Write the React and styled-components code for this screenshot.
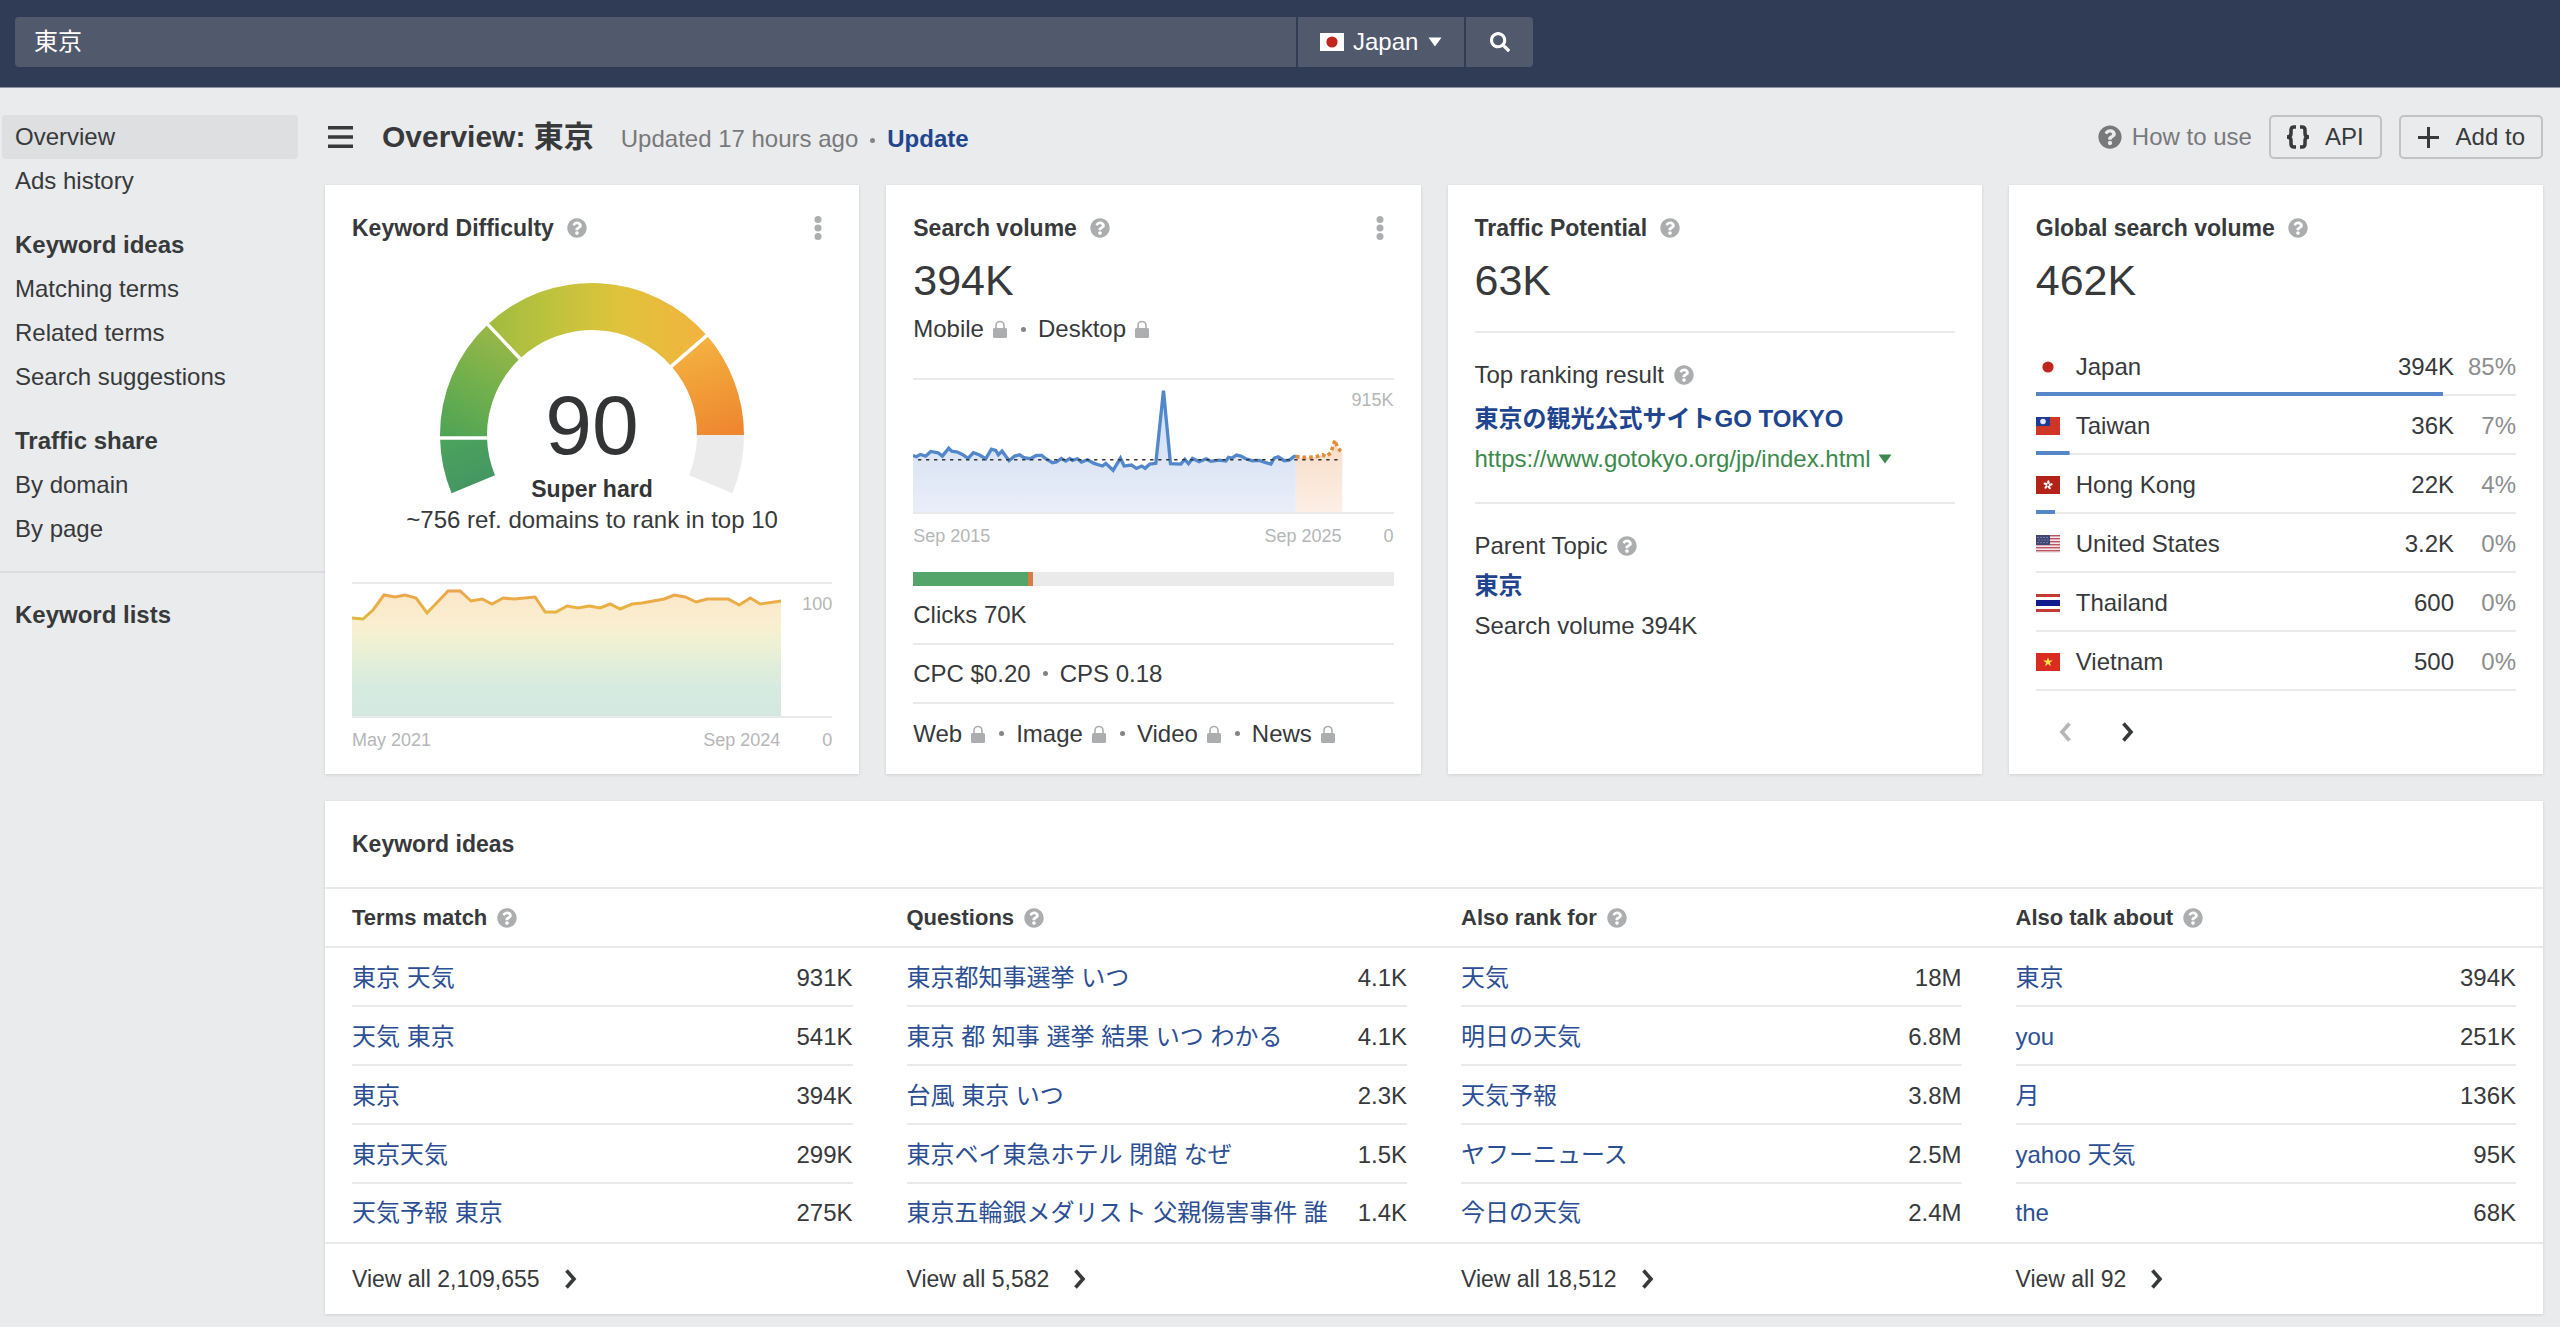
import React from 'react';
import styled, { createGlobalStyle, css } from 'styled-components';
import { FaQuestionCircle, FaSearch } from 'react-icons/fa';

const GlobalStyle = createGlobalStyle`
  *,
  *::before,
  *::after {
    box-sizing: border-box;
  }

  body {
    margin: 0;
    background: #eaebed;
    color: #37393b;
    font-family: 'Liberation Sans', 'Noto Sans CJK JP', Arial, sans-serif;
    font-size: 24px;
    line-height: 40px;
  }

  h1, h2, h3, p, ul {
    margin: 0;
    padding: 0;
  }

  button, input, select {
    margin: 0;
    padding: 0;
    border: 0;
    background: none;
    color: inherit;
    font: inherit;
  }

  a {
    color: inherit;
    text-decoration: none;
  }

  svg {
    display: block;
    flex: none;
  }
`;

const LINE = '#e9eaeb';

/* Top bar */

const TopBar = styled.header`
  padding: 17px 15px 20px;
  background: #303c55;
  border-bottom: 1px solid #8c93a1;
`;

const SearchForm = styled.form`
  display: flex;
  gap: 2px;
  height: 50px;
  width: 60%;
  border-radius: 4px;
  overflow: hidden;
  color: #fff;
`;

const SearchInput = styled.input`
  flex: 1;
  min-width: 0;
  padding: 0 19px;
  background: #51596d;
  outline: none;
`;

const CountryPicker = styled.label`
  display: flex;
  align-items: center;
  gap: 9px;
  padding: 0 22px;
  background: #51596d;
`;

const CountrySelect = styled.select`
  appearance: none;
  outline: none;
`;

const SearchButton = styled.button`
  display: flex;
  align-items: center;
  justify-content: center;
  width: 67px;
  background: #51596d;
`;

/* Side navigation */

const Page = styled.div`
  display: flex;
`;

const Sidebar = styled.nav`
  flex: none;
  width: 325px;
  padding-top: 27px;
`;

const NavGroup = styled.ul`
  margin-bottom: 20px;
  padding: 0 27px 0 2px;
  list-style: none;
`;

const navRow = css`
  display: block;
  padding-left: 13px;
  line-height: 44px;
`;

const NavHeading = styled.li`
  ${navRow}
  font-weight: bold;
`;

const NavLink = styled.a`
  ${navRow}
  border-radius: 4px;
  background: ${({ $active }) => ($active ? '#dedfe1' : 'transparent')};
`;

const NavDivider = styled.hr`
  height: 2px;
  margin: 0 0 20px;
  border: 0;
  background: #dcdde0;
`;

/* Page header */

const Main = styled.main`
  flex: 1;
  min-width: 0;
  padding: 27px 17px 15px 0;
`;

const PageHeader = styled.div`
  display: flex;
  align-items: center;
  gap: 17px;
  height: 44px;
  margin-bottom: 26px;
`;

const MenuButton = styled.button`
  padding: 0 12px 0 3px;
`;

const TitleGroup = styled.div`
  display: flex;
  align-items: baseline;
  flex: 1;
  gap: 27px;
`;

const PageTitle = styled.h1`
  font-size: 30px;
  line-height: 44px;
`;

const Updated = styled.p`
  color: #78797b;
`;

const UpdateLink = styled.a`
  color: #1f458f;
  font-weight: bold;
`;

const HelpLink = styled.a`
  display: flex;
  align-items: center;
  gap: 10px;
  color: #78797b;
`;

const OutlineButton = styled.button`
  display: flex;
  align-items: center;
  gap: 16px;
  height: 44px;
  padding: 0 16px;
  border: 2px solid #c1c2c4;
  border-radius: 5px;
`;

/* Cards */

const Cards = styled.div`
  display: grid;
  grid-template-columns: repeat(4, minmax(0, 1fr));
  gap: 27px;
  margin-bottom: 27px;
`;

const Panel = styled.section`
  background: #fff;
  box-shadow: 0 1px 3px rgba(0, 0, 0, 0.12);
`;

const Card = styled(Panel)`
  padding: 27px 27px 11px;
`;

const CardHeader = styled.div`
  display: flex;
  align-items: center;
  height: 32px;
`;

const CardTitle = styled.h2`
  margin-right: 3px;
  font-size: 23px;
  line-height: 32px;
`;

const IconButton = styled.button`
  display: flex;
  margin-left: ${({ $end }) => ($end ? 'auto' : '10px')};
  color: #acadae;
`;

const BigNumber = styled.p`
  margin-top: 8px;
  font-size: 43px;
  line-height: 56px;
`;

const InlineList = styled.div`
  display: flex;
  align-items: center;
  line-height: 42px;
`;

const StatRow = styled(InlineList)`
  height: 59px;
  border-bottom: 2px solid ${LINE};

  &:last-child {
    border-bottom: 0;
  }
`;

const Dot = styled.span`
  display: inline-block;
  width: 5px;
  height: 5px;
  margin: 0 12px;
  border-radius: 50%;
  background: #838486;
  vertical-align: middle;
`;

const GaugeBox = styled.div`
  display: flex;
  flex-direction: column;
  align-items: center;
  margin: 36px 0 48px;
  line-height: 28px;
`;

const GaugeNote = styled.p`
  white-space: nowrap;
`;

const ChartFigure = styled.figure`
  margin: ${({ $spaced }) => ($spaced ? '28px 0 14px' : '0')};
  color: #b5b6b7;
  font-size: 18px;
`;

const ChartBody = styled.div`
  display: flex;
  border-top: 2px solid ${LINE};
  border-bottom: 2px solid ${LINE};

  svg {
    flex: 1;
    min-width: 0;
    height: 132px;
  }
`;

const AxisMax = styled.span`
  width: 51px;
  text-align: right;
`;

const AxisRow = styled.div`
  display: flex;
  justify-content: space-between;
  line-height: 44px;
`;

const AxisEnd = styled.span`
  margin-left: auto;
`;

const AxisZero = styled.span`
  width: 52px;
  text-align: right;
`;

const ClicksBar = styled.div`
  display: flex;
  height: 14px;
  background: #eaeaeb;
`;

const ClicksPart = styled.span`
  background: ${({ $color }) => $color};
`;

const Block = styled.div`
  margin-top: 23px;
  padding-top: 22px;
  border-top: 2px solid ${LINE};
`;

const BlockLabel = styled.div`
  display: flex;
  align-items: center;
`;

const StrongLink = styled.a`
  display: block;
  margin-top: ${({ $spaced }) => ($spaced ? '4px' : '0')};
  color: #1f458f;
  font-weight: bold;
  white-space: nowrap;
`;

const UrlRow = styled.div`
  display: flex;
  align-items: center;
  gap: 7px;
  color: #3b8a4c;
`;

const CountryTable = styled.table`
  width: 100%;
  margin-top: 29px;
  border-collapse: collapse;
`;

const CountryRow = styled.tr`
  height: 59px;
  background:
    linear-gradient(#5587c8, #5587c8) left bottom / ${({ $share }) => $share}% 4px no-repeat,
    linear-gradient(${LINE}, ${LINE}) left bottom / 100% 2px no-repeat;
`;

const CountryName = styled.th`
  padding: 0;
  font-weight: normal;
  text-align: left;

  span {
    display: flex;
    align-items: center;
    gap: 16px;
  }
`;

const NumberCell = styled.td`
  padding: 0;
  text-align: right;
`;

const ShareCell = styled(NumberCell)`
  width: 62px;
  color: #8d8e90;
`;

const Pager = styled.div`
  display: flex;
  gap: 5px;
  margin-top: 21px;
`;

const PagerButton = styled.button`
  display: flex;
  align-items: center;
  justify-content: center;
  width: 58px;
  height: 40px;

  &:disabled {
    color: #b5b6b7;
  }
`;

/* Keyword ideas */

const IdeasTitle = styled.h2`
  padding: 0 27px;
  border-bottom: 2px solid ${LINE};
  font-size: 23px;
  line-height: 86px;
`;

const IdeasGrid = styled.div`
  display: grid;
  grid-template-columns: repeat(4, minmax(0, 1fr));
  gap: 54px;
  padding: 0 27px;
`;

const IdeasHeader = styled(IdeasGrid)`
  border-bottom: 2px solid ${LINE};
`;

const IdeasFooter = styled(IdeasGrid)`
  border-top: 2px solid ${LINE};
`;

const ColumnHeading = styled.div`
  display: flex;
  align-items: center;
  height: 57px;

  h3 {
    font-size: 22px;
  }
`;

const IdeasTable = styled.table`
  width: 100%;
  border-collapse: collapse;

  tr {
    height: 59px;
    background: linear-gradient(${LINE}, ${LINE}) left bottom / 100% 2px no-repeat;
  }

  tr:last-child {
    height: 58px;
    background: none;
  }

  td:first-child {
    padding: 0;
    white-space: nowrap;
  }
`;

const KeywordLink = styled.a`
  color: #2c4f94;
`;

const ViewAll = styled.a`
  display: flex;
  align-items: center;
  gap: 24px;
  height: 70px;
  font-size: 23px;
`;

/* Icons */

const Help = ({ label }) => (
  <IconButton type="button" aria-label={`About ${label}`}>
    <FaQuestionCircle size={20} />
  </IconButton>
);

const Kebab = () => (
  <IconButton $end type="button" aria-label="More options">
    <svg width="28" height="26" viewBox="0 0 28 26" fill="currentColor">
      <circle cx="14" cy="4.5" r="3.5" />
      <circle cx="14" cy="13" r="3.5" />
      <circle cx="14" cy="21.5" r="3.5" />
    </svg>
  </IconButton>
);

const LockSvg = styled.svg`
  margin: 0 2px 0 9px;
  color: #acadae;
`;

const Lock = () => (
  <LockSvg width="14" height="18" viewBox="0 0 14 18">
    <path
      d="M3 9V5.5a4 4 0 0 1 8 0V9"
      fill="none"
      stroke="currentColor"
      strokeWidth="1.6"
    />
    <rect y="8" width="14" height="10" rx="1.5" fill="currentColor" />
  </LockSvg>
);

const Caret = () => (
  <svg width="14" height="10" viewBox="0 0 14 10" fill="currentColor">
    <path d="M0.5 0.5h13L7 9.5z" />
  </svg>
);

const Chevron = ({ left }) => (
  <svg width="14" height="20" viewBox="0 0 14 20" fill="none">
    <path
      d={left ? 'M11.5 1.5L4 10l7.5 8.5' : 'M2.5 1.5L10 10l-7.5 8.5'}
      stroke="currentColor"
      strokeWidth="3.6"
    />
  </svg>
);

const Flag = ({ code }) => (
  <svg width="24" height="18" viewBox="0 0 24 18">
    {code === 'jp' && (
      <>
        <rect width="24" height="18" fill="#fff" />
        <circle cx="12" cy="9" r="5.6" fill="#c0261c" />
      </>
    )}
    {code === 'tw' && (
      <>
        <rect width="24" height="18" fill="#cf3626" />
        <rect width="14" height="9" fill="#1f3a93" />
        <circle cx="7" cy="4.5" r="2.8" fill="#dfe8fa" />
      </>
    )}
    {code === 'hk' && (
      <>
        <rect width="24" height="18" fill="#b32317" />
        {[0, 72, 144, 216, 288].map(angle => (
          <ellipse
            key={angle}
            cx="12.4"
            cy="6.4"
            rx="1.2"
            ry="2.2"
            fill="#fff"
            transform={`rotate(${angle} 12 9)`}
          />
        ))}
        <circle cx="12" cy="9" r="0.9" fill="#b32317" />
      </>
    )}
    {code === 'us' && (
      <>
        <rect width="24" height="18" fill="#f3e6e8" />
        {[0, 3, 6, 9, 12, 15].map(y => (
          <rect key={y} y={y} width="24" height="1.4" fill="#bd5560" />
        ))}
        <rect width="14" height="10" fill="#3e4674" />
        <g fill="#a9aec8">
          {[2, 5, 8, 11].map(x => (
            <React.Fragment key={x}>
              <circle cx={x} cy="2.4" r="0.6" />
              <circle cx={x + 1} cy="5" r="0.6" />
              <circle cx={x} cy="7.6" r="0.6" />
            </React.Fragment>
          ))}
        </g>
      </>
    )}
    {code === 'th' && (
      <>
        <rect width="24" height="18" fill="#fff" />
        <rect width="24" height="3" fill="#c43b30" />
        <rect y="15" width="24" height="3" fill="#c43b30" />
        <rect y="6" width="24" height="6" fill="#101b8d" />
      </>
    )}
    {code === 'vn' && (
      <>
        <rect width="24" height="18" fill="#d92b20" />
        <path
          d="M12 4.2l1.2 3.4h3.6l-2.9 2.1 1.1 3.5-3-2.1-3 2.1 1.1-3.5-2.9-2.1h3.6z"
          fill="#ffe24a"
        />
      </>
    )}
  </svg>
);

/* Difficulty gauge */

const GAUGE_CENTER = 155;
const OUTER = 152;
const INNER = 105;

// degrees run clockwise from the left horizontal
const point = (radius, degrees) => {
  const angle = (degrees * Math.PI) / 180;
  const x = GAUGE_CENTER - radius * Math.cos(angle);
  const y = GAUGE_CENTER - radius * Math.sin(angle);
  return `${x.toFixed(2)} ${y.toFixed(2)}`;
};

const arc = (from, to) =>
  `M${point(OUTER, from)} A${OUTER} ${OUTER} 0 0 1 ${point(OUTER, to)} ` +
  `L${point(INNER, to)} A${INNER} ${INNER} 0 0 0 ${point(INNER, from)}Z`;

const notch = degrees => `M${point(OUTER + 2, degrees)} L${point(INNER - 2, degrees)}`;

const Gauge = () => (
  <svg width="310" height="226" viewBox="0 0 310 226" role="img" aria-label="Keyword difficulty 90">
    <defs>
      <linearGradient id="g1" gradientUnits="userSpaceOnUse" x1="30" y1="213" x2="10" y2="158">
        <stop offset="0" stopColor="#449563" />
        <stop offset="1" stopColor="#4ca35c" />
      </linearGradient>
      <linearGradient id="g2" gradientUnits="userSpaceOnUse" x1="10" y1="155" x2="70" y2="50">
        <stop offset="0" stopColor="#4fa456" />
        <stop offset="0.5" stopColor="#73b04c" />
        <stop offset="1" stopColor="#9db846" />
      </linearGradient>
      <linearGradient id="g3" gradientUnits="userSpaceOnUse" x1="50" y1="0" x2="268" y2="0">
        <stop offset="0" stopColor="#a0bb40" />
        <stop offset="0.28" stopColor="#bcc23d" />
        <stop offset="0.6" stopColor="#dfc33c" />
        <stop offset="1" stopColor="#f2b33e" />
      </linearGradient>
      <linearGradient id="g4" gradientUnits="userSpaceOnUse" x1="250" y1="60" x2="285" y2="155">
        <stop offset="0" stopColor="#f4b340" />
        <stop offset="1" stopColor="#ee8730" />
      </linearGradient>
    </defs>
    <path d={arc(-22.5, -1.2)} fill="url(#g1)" />
    <path d={arc(-1.2, 46.7)} fill="url(#g2)" />
    <path d={arc(46.7, 139.1)} fill="url(#g3)" />
    <path d={arc(139.1, 180)} fill="url(#g4)" />
    <path d={arc(180, 202.5)} fill="#ebebec" />
    <path d={`M0 158H54 ${notch(46.7)} ${notch(139.1)}`} stroke="#fff" strokeWidth="3.5" />
    <text x="155" y="174" textAnchor="middle" fontSize="84" fill="#333436">
      90
    </text>
    <text x="155" y="217" textAnchor="middle" fontSize="23" fontWeight="bold" fill="#333436">
      Super hard
    </text>
  </svg>
);

/* Charts */

const difficultyLine =
  '0,34 11,35 21,26 32,11 43,13 53,11 64,14 75,29 96,7 108,7 119,17 130,15 140,20 151,14 162,15 183,13 ' +
  '193,28 204,28 215,22 226,24 237,22 248,24 258,20 268,25 280,20 290,19 301,17 312,15 322,11 333,13 ' +
  '344,18 355,15 376,15 387,21 398,14 408,20 429,17';

const DifficultyChart = () => (
  <svg viewBox="0 0 429 132" preserveAspectRatio="none">
    <defs>
      <linearGradient id="kdFill" gradientUnits="userSpaceOnUse" x1="0" y1="5" x2="0" y2="132">
        <stop offset="0" stopColor="#fbe6c8" />
        <stop offset="0.3" stopColor="#f9f0d0" />
        <stop offset="0.42" stopColor="#eff1d3" />
        <stop offset="0.78" stopColor="#d5ebe0" />
        <stop offset="1" stopColor="#d4e8df" />
      </linearGradient>
      <linearGradient id="kdLine" gradientUnits="userSpaceOnUse" x1="0" y1="7" x2="0" y2="35">
        <stop offset="0" stopColor="#eda24e" />
        <stop offset="0.5" stopColor="#eab044" />
        <stop offset="1" stopColor="#dfb83f" />
      </linearGradient>
    </defs>
    <polygon points={`0,132 ${difficultyLine} 429,132`} fill="url(#kdFill)" />
    <polyline points={difficultyLine} fill="none" stroke="url(#kdLine)" strokeWidth="3" />
  </svg>
);

// three chart units to the pixel
const volumeLine =
  '0,228 10,232 22,225 38,230 53,216 75,220 88,230 107,206 116,215 133,218 148,225 165,237 181,220 ' +
  '198,226 218,238 235,209 248,213 256,226 267,215 288,244 305,230 320,226 333,235 351,238 370,228 ' +
  '386,228 398,238 418,250 430,248 445,237 458,245 470,237 478,243 493,238 505,248 523,241 543,252 ' +
  '568,260 578,252 600,273 622,236 633,260 655,257 670,267 686,260 696,267 710,254 728,252 751,32 ' +
  '772,253 803,254 815,240 826,253 838,237 858,247 879,238 893,246 918,242 938,245 946,234 956,236 ' +
  '970,227 983,230 998,238 1018,244 1038,243 1058,250 1073,254 1083,236 1095,232 1113,244 1128,242 ' +
  '1143,231 1148,231';

const forecastLine =
  '1148,231 1163,234 1188,234 1208,232 1228,226 1238,232 1253,220 1265,182 1273,205 1287,220';

const VolumeChart = () => (
  <svg viewBox="0 0 1287 399" preserveAspectRatio="none">
    <defs>
      <linearGradient id="volumeFill" gradientUnits="userSpaceOnUse" x1="0" y1="30" x2="0" y2="399">
        <stop offset="0" stopColor="#cfe0f6" />
        <stop offset="0.6" stopColor="#dde6f5" />
        <stop offset="1" stopColor="#e9eef9" />
      </linearGradient>
      <linearGradient id="forecastFill" gradientUnits="userSpaceOnUse" x1="0" y1="180" x2="0" y2="399">
        <stop offset="0" stopColor="#f9dcc6" />
        <stop offset="1" stopColor="#fcefe6" />
      </linearGradient>
    </defs>
    <polygon points={`0,399 ${volumeLine} 1148,399`} fill="url(#volumeFill)" />
    <polygon points={`1148,399 ${forecastLine} 1287,399`} fill="url(#forecastFill)" />
    <polyline points={volumeLine} fill="none" stroke="#5288cb" strokeWidth="10" />
    <polyline
      points={forecastLine}
      fill="none"
      stroke="#e28d3c"
      strokeWidth="11"
      strokeDasharray="11 9"
    />
    <line x1="15" x2="1287" y1="241" y2="241" stroke="#333" strokeWidth="4" strokeDasharray="10 14" />
  </svg>
);

const Chart = ({ children, max, start, end, spaced }) => (
  <ChartFigure $spaced={spaced}>
    <ChartBody>
      {children}
      <AxisMax>{max}</AxisMax>
    </ChartBody>
    <AxisRow>
      <span>{start}</span>
      <AxisEnd>{end}</AxisEnd>
      <AxisZero>0</AxisZero>
    </AxisRow>
  </ChartFigure>
);

/* Data */

const navigation = [
  { items: ['Overview', 'Ads history'] },
  {
    title: 'Keyword ideas',
    items: ['Matching terms', 'Related terms', 'Search suggestions'],
  },
  { title: 'Traffic share', items: ['By domain', 'By page'] },
];

const countries = [
  { code: 'jp', name: 'Japan', volume: '394K', share: 85 },
  { code: 'tw', name: 'Taiwan', volume: '36K', share: 7 },
  { code: 'hk', name: 'Hong Kong', volume: '22K', share: 4 },
  { code: 'us', name: 'United States', volume: '3.2K', share: 0 },
  { code: 'th', name: 'Thailand', volume: '600', share: 0 },
  { code: 'vn', name: 'Vietnam', volume: '500', share: 0 },
];

const ideas = [
  {
    title: 'Terms match',
    total: '2,109,655',
    rows: [
      ['東京 天気', '931K'],
      ['天気 東京', '541K'],
      ['東京', '394K'],
      ['東京天気', '299K'],
      ['天気予報 東京', '275K'],
    ],
  },
  {
    title: 'Questions',
    total: '5,582',
    rows: [
      ['東京都知事選挙 いつ', '4.1K'],
      ['東京 都 知事 選挙 結果 いつ わかる', '4.1K'],
      ['台風 東京 いつ', '2.3K'],
      ['東京ベイ東急ホテル 閉館 なぜ', '1.5K'],
      ['東京五輪銀メダリスト 父親傷害事件 誰', '1.4K'],
    ],
  },
  {
    title: 'Also rank for',
    total: '18,512',
    rows: [
      ['天気', '18M'],
      ['明日の天気', '6.8M'],
      ['天気予報', '3.8M'],
      ['ヤフーニュース', '2.5M'],
      ['今日の天気', '2.4M'],
    ],
  },
  {
    title: 'Also talk about',
    total: '92',
    rows: [
      ['東京', '394K'],
      ['you', '251K'],
      ['月', '136K'],
      ['yahoo 天気', '95K'],
      ['the', '68K'],
    ],
  },
];

/* Sections */

const Header = () => (
  <TopBar>
    <SearchForm onSubmit={event => event.preventDefault()}>
      <SearchInput type="text" aria-label="Keyword" defaultValue="東京" />
      <CountryPicker>
        <Flag code="jp" />
        <CountrySelect aria-label="Country">
          <option>Japan</option>
        </CountrySelect>
        <Caret />
      </CountryPicker>
      <SearchButton type="submit" aria-label="Search">
        <FaSearch size={20} />
      </SearchButton>
    </SearchForm>
  </TopBar>
);

const Navigation = () => (
  <Sidebar>
    {navigation.map(({ title, items }) => (
      <NavGroup key={items[0]}>
        {title && <NavHeading>{title}</NavHeading>}
        {items.map(item => (
          <li key={item}>
            <NavLink href="#" $active={item === 'Overview'}>
              {item}
            </NavLink>
          </li>
        ))}
      </NavGroup>
    ))}
    <NavDivider />
    <NavGroup>
      <NavHeading>Keyword lists</NavHeading>
    </NavGroup>
  </Sidebar>
);

const Toolbar = () => (
  <PageHeader>
    <MenuButton type="button" aria-label="Toggle menu">
      <svg width="25" height="22" viewBox="0 0 25 22" fill="currentColor">
        <path d="M0 0h25v3.5H0zM0 9.2h25v3.5H0zM0 18.4h25v3.5H0z" />
      </svg>
    </MenuButton>
    <TitleGroup>
      <PageTitle>Overview: 東京</PageTitle>
      <Updated>
        Updated 17 hours ago
        <Dot />
        <UpdateLink href="#">Update</UpdateLink>
      </Updated>
    </TitleGroup>
    <HelpLink href="#">
      <FaQuestionCircle size={24} />
      How to use
    </HelpLink>
    <OutlineButton type="button">
      <svg width="22" height="24" viewBox="1 0 22 24" fill="none" stroke="currentColor" strokeWidth="3.5">
        <path d="M10 2H8Q5 2 5 5V8.5Q5 12 1 12Q5 12 5 15.5V19Q5 22 8 22H10" />
        <path d="M14 2H16Q19 2 19 5V8.5Q19 12 23 12Q19 12 19 15.5V19Q19 22 16 22H14" />
      </svg>
      API
    </OutlineButton>
    <OutlineButton type="button">
      <svg width="23" height="23" viewBox="-1 -1 23 23" fill="currentColor">
        <path d="M9 0h3v9h9v3h-9v9H9v-9H0V9h9z" />
      </svg>
      Add to
    </OutlineButton>
  </PageHeader>
);

const DifficultyCard = () => (
  <Card>
    <CardHeader>
      <CardTitle>Keyword Difficulty</CardTitle>
      <Help label="Keyword Difficulty" />
      <Kebab />
    </CardHeader>
    <GaugeBox>
      <Gauge />
      <GaugeNote>~756 ref. domains to rank in top 10</GaugeNote>
    </GaugeBox>
    <Chart max="100" start="May 2021" end="Sep 2024">
      <DifficultyChart />
    </Chart>
  </Card>
);

const VolumeCard = () => (
  <Card>
    <CardHeader>
      <CardTitle>Search volume</CardTitle>
      <Help label="Search volume" />
      <Kebab />
    </CardHeader>
    <BigNumber>394K</BigNumber>
    <InlineList>
      Mobile
      <Lock />
      <Dot />
      Desktop
      <Lock />
    </InlineList>
    <Chart max="915K" start="Sep 2015" end="Sep 2025" spaced>
      <VolumeChart />
    </Chart>
    <ClicksBar>
      <ClicksPart $color="#54a569" style={{ width: '23.8%' }} />
      <ClicksPart $color="#d87c42" style={{ width: '1.2%' }} />
    </ClicksBar>
    <StatRow>Clicks 70K</StatRow>
    <StatRow>
      CPC $0.20
      <Dot />
      CPS 0.18
    </StatRow>
    <StatRow>
      Web
      <Lock />
      <Dot />
      Image
      <Lock />
      <Dot />
      Video
      <Lock />
      <Dot />
      News
      <Lock />
    </StatRow>
  </Card>
);

const PotentialCard = () => (
  <Card>
    <CardHeader>
      <CardTitle>Traffic Potential</CardTitle>
      <Help label="Traffic Potential" />
    </CardHeader>
    <BigNumber>63K</BigNumber>
    <Block>
      <BlockLabel>
        Top ranking result
        <Help label="Top ranking result" />
      </BlockLabel>
      <StrongLink href="#" $spaced>
        東京の観光公式サイトGO TOKYO
      </StrongLink>
      <UrlRow>
        <a href="#">https://www.gotokyo.org/jp/index.html</a>
        <button type="button" aria-label="URL options">
          <Caret />
        </button>
      </UrlRow>
    </Block>
    <Block>
      <BlockLabel>
        Parent Topic
        <Help label="Parent Topic" />
      </BlockLabel>
      <StrongLink href="#">東京</StrongLink>
      <p>Search volume 394K</p>
    </Block>
  </Card>
);

const GlobalCard = () => (
  <Card>
    <CardHeader>
      <CardTitle>Global search volume</CardTitle>
      <Help label="Global search volume" />
    </CardHeader>
    <BigNumber>462K</BigNumber>
    <CountryTable>
      <tbody>
        {countries.map(({ code, name, volume, share }) => (
          <CountryRow key={code} $share={share}>
            <CountryName scope="row">
              <span>
                <Flag code={code} />
                {name}
              </span>
            </CountryName>
            <NumberCell>{volume}</NumberCell>
            <ShareCell>{share}%</ShareCell>
          </CountryRow>
        ))}
      </tbody>
    </CountryTable>
    <Pager>
      <PagerButton type="button" aria-label="Previous" disabled>
        <Chevron left />
      </PagerButton>
      <PagerButton type="button" aria-label="Next">
        <Chevron />
      </PagerButton>
    </Pager>
  </Card>
);

const KeywordIdeas = () => (
  <Panel>
    <IdeasTitle>Keyword ideas</IdeasTitle>
    <IdeasHeader>
      {ideas.map(({ title }, index) => (
        <ColumnHeading key={title}>
          <h3 id={`ideas-${index}`}>{title}</h3>
          <Help label={title} />
        </ColumnHeading>
      ))}
    </IdeasHeader>
    <IdeasGrid>
      {ideas.map(({ title, rows }, index) => (
        <IdeasTable key={title} aria-labelledby={`ideas-${index}`}>
          <tbody>
            {rows.map(([keyword, volume]) => (
              <tr key={keyword}>
                <td>
                  <KeywordLink href="#">{keyword}</KeywordLink>
                </td>
                <NumberCell>{volume}</NumberCell>
              </tr>
            ))}
          </tbody>
        </IdeasTable>
      ))}
    </IdeasGrid>
    <IdeasFooter>
      {ideas.map(({ title, total }) => (
        <ViewAll key={title} href="#">
          View all {total}
          <Chevron />
        </ViewAll>
      ))}
    </IdeasFooter>
  </Panel>
);

const App = () => (
  <>
    <GlobalStyle />
    <Header />
    <Page>
      <Navigation />
      <Main>
        <Toolbar />
        <Cards>
          <DifficultyCard />
          <VolumeCard />
          <PotentialCard />
          <GlobalCard />
        </Cards>
        <KeywordIdeas />
      </Main>
    </Page>
  </>
);

export default App;
